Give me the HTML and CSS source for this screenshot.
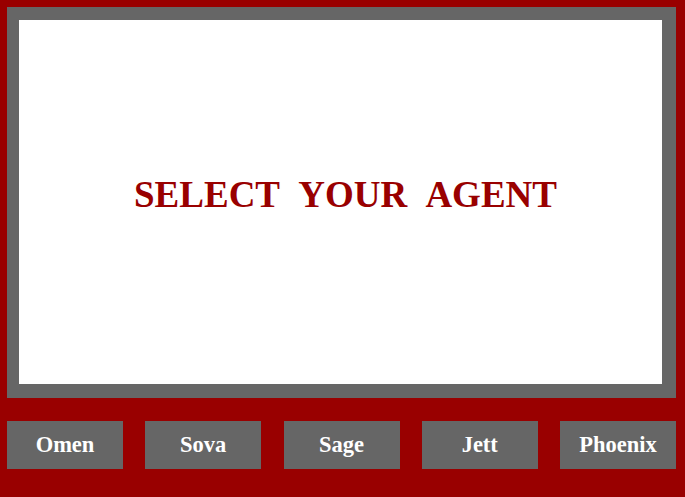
FILE: index.html
```html
<!DOCTYPE html>
<html>
<head>
<meta charset="utf-8">
<link rel="stylesheet" href="styles.css">
</head>
<body>
<div class="page">
  <div class="frame">
    <div class="screen">
      <h1 class="title">SELECT YOUR AGENT</h1>
    </div>
  </div>
  <div class="agents">
    <button class="agent">Omen</button>
    <button class="agent">Sova</button>
    <button class="agent">Sage</button>
    <button class="agent">Jett</button>
    <button class="agent">Phoenix</button>
  </div>
</div>
</body>
</html>
```
FILE: styles.css
```css
html, body {
  margin: 0;
  padding: 0;
  background: #990000;
  height: 100%;
}
.page {
  padding: 7px 9px 0 7px;
  font-family: "Liberation Serif", "Times New Roman", serif;
}
.frame {
  background: #666666;
  padding: 13px 14px 14px 12px;
}
.screen {
  background: #ffffff;
  height: 364px;
  display: flex;
  align-items: center;
  justify-content: center;
}
.title {
  margin: 0;
  color: #990000;
  font-size: 37px;
  font-weight: bold;
  word-spacing: 11px;
  padding: 0 0 16px 10px;
}
.agents {
  display: flex;
  justify-content: space-between;
  margin-top: 23px;
}
.agent {
  width: 116px;
  height: 48px;
  background: #666666;
  border: none;
  color: #ffffff;
  font-family: "Liberation Serif", "Times New Roman", serif;
  font-weight: bold;
  font-size: 22.5px;
  padding: 0;
}
```
